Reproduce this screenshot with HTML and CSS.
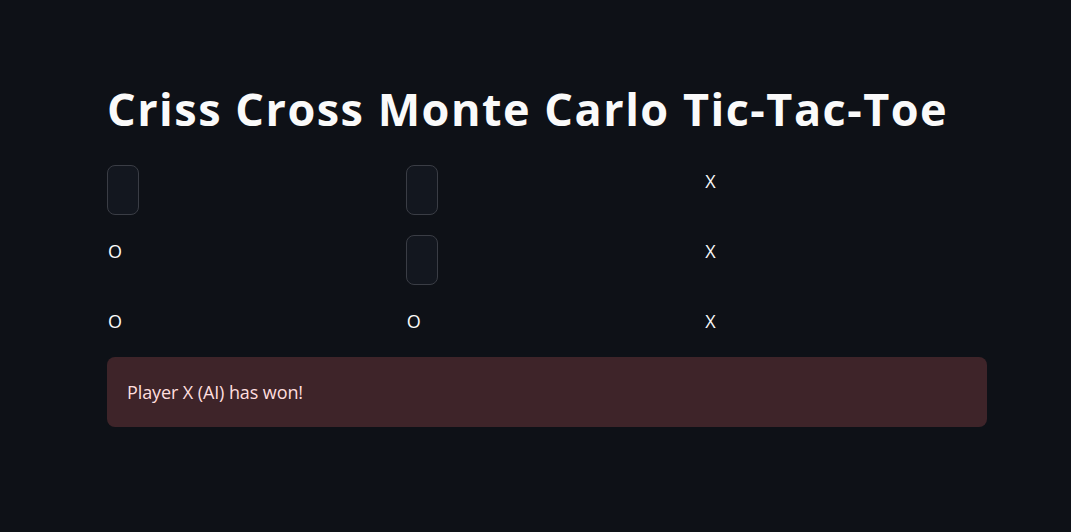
FILE: index.html
```html
<!DOCTYPE html>
<html>
<head>
<meta charset="utf-8">
<link rel="stylesheet" href="styles.css">
</head>
<body>
<main class="main">
  <h1 class="title">Criss Cross Monte Carlo Tic-Tac-Toe</h1>
  <div class="board">
    <div class="row row-tall">
      <div class="cell"><button class="btn"></button></div>
      <div class="cell"><button class="btn"></button></div>
      <div class="cell"><p class="mark">X</p></div>
    </div>
    <div class="row row-tall">
      <div class="cell"><p class="mark">O</p></div>
      <div class="cell"><button class="btn"></button></div>
      <div class="cell"><p class="mark">X</p></div>
    </div>
    <div class="row row-short">
      <div class="cell"><p class="mark">O</p></div>
      <div class="cell"><p class="mark">O</p></div>
      <div class="cell"><p class="mark">X</p></div>
    </div>
  </div>
  <div class="alert">Player X (AI) has won!</div>
</main>
</body>
</html>
```

FILE: styles.css
```css
html, body {
  margin: 0;
  padding: 0;
  background: #0e1117;
  color: #fafafa;
  font-family: "Open Sans", "Liberation Sans", sans-serif;
}
.main {
  width: 880px;
  padding: 0 0 0 107px;
  display: flex;
  flex-direction: column;
}
.title {
  margin: 0;
  padding-top: 80px;
  height: 85px;
  font-size: 45px;
  font-weight: 700;
  line-height: 58px;
  letter-spacing: 1.5px;
  white-space: nowrap;
}
.board {
  display: flex;
  flex-direction: column;
  gap: 16px;
}
.row {
  display: grid;
  grid-template-columns: repeat(3, 1fr);
  column-gap: 16px;
}
.row-tall { height: 54px; }
.row-short { height: 36px; }
.cell {
  display: flex;
  align-items: flex-start;
}
.btn {
  width: 32px;
  height: 50px;
  background: #13171f;
  border: 1px solid #3a3d45;
  border-radius: 8px;
  padding: 0;
}
.mark {
  margin: 0;
  padding-top: 3px;
  padding-left: 1px;
  font-size: 18px;
  line-height: 26px;
}
.alert {
  margin-top: 16px;
  height: 70px;
  box-sizing: border-box;
  padding: 0 20px;
  display: flex;
  align-items: center;
  background: #3e2429;
  color: #ffdede;
  border-radius: 8px;
  font-size: 18px;
  letter-spacing: -0.1px;
}
```
